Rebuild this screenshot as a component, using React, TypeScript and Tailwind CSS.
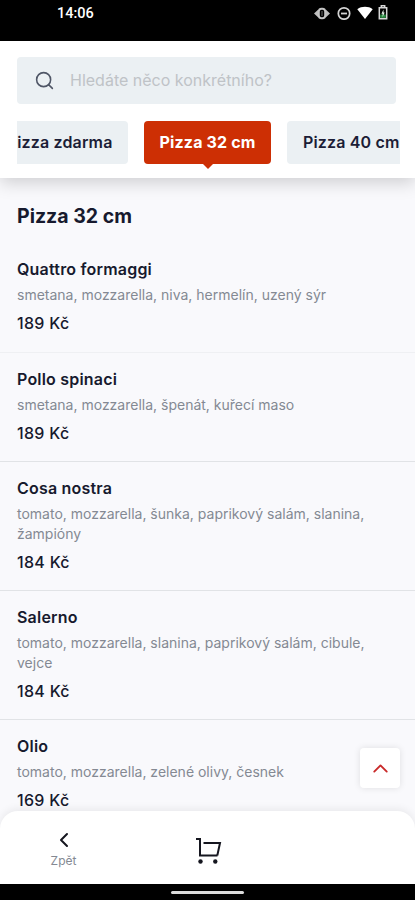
import { ChevronLeft, ChevronUp, Search } from 'lucide-react'

const items = [
  { name: 'Quattro formaggi', description: 'smetana, mozzarella, niva, hermelín, uzený sýr', price: '189 Kč' },
  { name: 'Pollo spinaci', description: 'smetana, mozzarella, špenát, kuřecí maso', price: '189 Kč' },
  { name: 'Cosa nostra', description: 'tomato, mozzarella, šunka, paprikový salám, slanina, žampióny', price: '184 Kč' },
  { name: 'Salerno', description: 'tomato, mozzarella, slanina, paprikový salám, cibule, vejce', price: '184 Kč' },
  { name: 'Olio', description: 'tomato, mozzarella, zelené olivy, česnek', price: '169 Kč' },
]

function StatusBar() {
  return (
    <div className="flex h-[41px] shrink-0 items-start justify-between bg-black pr-[27px] pl-[57px] text-white">
      <span className="mt-[4px] font-['Roboto'] text-[14.5px] leading-5 font-medium">14:06</span>
      <div className="mt-[5px] flex items-center">
        <svg width="16" height="14" viewBox="0 0 16 14" className="mr-[7px]">
          <path d="M0 7.500 4 3.800v7.400zM16 7.500 12 3.800v7.400z" fill="#bdbdbd" />
          <rect x="4.800" y="2.800" width="6.400" height="9.400" rx="2.800" fill="none" stroke="#c4c4c4" strokeWidth="2" />
          <path d="M8 5v5" stroke="#6a6a6a" strokeWidth="1" />
        </svg>
        <svg width="14" height="14" viewBox="0 0 14 14" className="mr-[6px]">
          <circle cx="7" cy="7.500" r="5.700" fill="none" stroke="#d4d4d4" strokeWidth="1.700" />
          <path d="M4 7.500h6" stroke="#d4d4d4" strokeWidth="1.800" />
        </svg>
        <svg width="16" height="14" viewBox="0 0 16 14" className="mr-[5px]">
          <path d="M.3 3.200C4.700 0 11.300 0 15.700 3.200L8 13z" fill="#fff" />
        </svg>
        <svg width="10" height="15" viewBox="0 0 10 15">
          <path d="M3.300 2.200V.8h3.400v1.400M1.300 2.700h7.400v11H1.300z" fill="none" stroke="#d6d6d6" strokeWidth="1.500" />
          <path d="M2.200 9.500h5.600v3.400H2.200z" fill="#2f8f46" />
          <path d="M5.500 4.500 3.400 8.700h1.200v3.200l2.100-4.400H5.500z" fill="#e8f5ea" />
        </svg>
      </div>
    </div>
  )
}

function Header() {
  return (
    <header className="relative z-10 h-[137px] shrink-0 bg-white px-[17px] pt-4 shadow-[0_5px_16px_rgba(0,0,0,0.17)]">
      <div className="flex h-[47px] w-[379px] items-center rounded bg-[#ebf0f3] pl-[17px]">
        <Search size={21} strokeWidth={1.8} className="text-[#4f5666]" />
        <span className="ml-[15px] pb-0.5 text-[16px] text-[#bfc3c7]">Hledáte něco konkrétního?</span>
      </div>
      <nav className="mt-[17px] flex w-[383px] gap-4 overflow-hidden pb-2 text-[16px] font-semibold tracking-[0.15px] whitespace-nowrap text-[#1b1d36]">
        <div className="flex h-[43px] w-[111px] shrink-0 items-center justify-end overflow-hidden rounded-r bg-[#ebf0f3] pr-[15.5px] pb-0.5">
          izza zdarma
        </div>
        <div className="relative flex h-[43px] w-[127px] shrink-0 items-center justify-center rounded bg-[#cd2f04] pb-0.5 font-bold text-white">
          Pizza 32 cm
          <svg width="12" height="6" viewBox="0 0 12 6" className="absolute top-[42px] left-[58px]">
            <path d="M0 0h12L6 6z" fill="#cd2f04" />
          </svg>
        </div>
        <div className="flex h-[43px] w-[127px] shrink-0 items-center rounded-l bg-[#ebf0f3] pb-0.5 pl-4">Pizza 40 cm</div>
      </nav>
    </header>
  )
}

function MenuList() {
  return (
    <main className="min-h-0 flex-1 overflow-hidden pt-[26px]">
      <h1 className="px-[17px] text-[19.5px] leading-[25px] font-bold">Pizza 32 cm</h1>
      <div className="mt-[14.2px]">
        {items.map((item) => (
          <section key={item.name} className="border-b border-[#e1e3e6] px-[17px] pt-[15px] pb-[17.4px] first:border-[#eff0f3]">
            <h2 className="text-[16px] leading-[22px] font-semibold tracking-[0.2px]">{item.name}</h2>
            <p className="mt-[5px] w-[370px] text-[14px] leading-[19.7px] text-[#848993]">{item.description}</p>
            <p className="mt-[7.3px] text-[16px] leading-[22px] font-medium tracking-[0.3px]">{item.price}</p>
          </section>
        ))}
      </div>
    </main>
  )
}

function CartIcon() {
  return (
    <svg width="29" height="28" viewBox="0 0 29 28" fill="none" stroke="#15161f" strokeWidth="2">
      <path d="M3 2h4v16.500h17.500" />
      <path d="M10.500 6h16.500L24.300 18.500" />
      <circle cx="7.500" cy="24.500" r="2.200" fill="#15161f" stroke="none" />
      <circle cx="22.300" cy="24.500" r="2.200" fill="#15161f" stroke="none" />
    </svg>
  )
}

function BottomBar() {
  return (
    <footer className="relative z-10 -mt-5 grid h-[73px] shrink-0 grid-cols-[127px_1fr_127px] rounded-t-[18px] bg-white shadow-[0_-2px_8px_rgba(0,0,0,0.07)]">
      <div className="flex flex-col items-center pt-[17px]">
        <ChevronLeft size={24} strokeWidth={2} className="text-[#15161f]" />
        <span className="mt-px text-[12px] leading-4 text-[#848993]">Zpět</span>
      </div>
      <div className="flex justify-center pt-[26px]">
        <CartIcon />
      </div>
    </footer>
  )
}

export default function App() {
  return (
    <div className="relative flex h-[900px] w-[415px] flex-col overflow-hidden bg-[#f9f9fc] font-['Inter',sans-serif] text-[#171a2e]">
      <StatusBar />
      <Header />
      <MenuList />
      <BottomBar />
      <div className="flex h-4 shrink-0 justify-center bg-black pt-[7px]">
        <div className="h-[3px] w-[73px] rounded-full bg-[#dcdcdc]" />
      </div>
      <button className="absolute top-[748px] left-[360px] flex h-10 w-10 items-center justify-center rounded bg-white text-[#c92a2a] shadow-[0_0_7px_rgba(0,0,0,0.11)]">
        <ChevronUp size={25} strokeWidth={1.8} />
      </button>
    </div>
  )
}
